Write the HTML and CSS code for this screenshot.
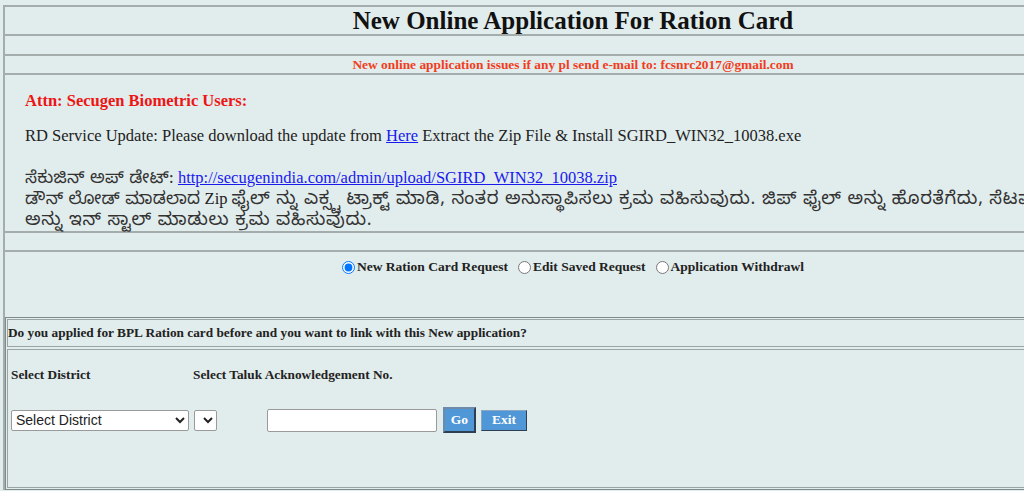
FILE: index.html
```html
<!DOCTYPE html>
<html lang="en">
  <head>
    <meta charset="UTF-8" />
    <meta name="viewport" content="width=device-width, initial-scale=1.0" />
    <title>New Online Application For Ration Card</title>
    <link rel="stylesheet" href="styles.css">
  </head>
  <body>
    <div class="page">
      <div class="row title-row">New Online Application For Ration Card</div>
      <div class="row blank-row"></div>
      <div class="row notice-row">New online application issues if any pl send e-mail to: fcsnrc2017@gmail.com</div>

      <div class="row info-row">
        <p class="attn">Attn: Secugen Biometric Users:</p>
        <p class="rd">RD Service Update: Please download the update from <a href="#">Here</a> Extract the Zip File &amp; Install SGIRD_WIN32_10038.exe</p>
        <div class="kn">
          <div class="kn-line"><span class="kan small">ಸೆಕುಜಿನ್ ಅಪ್ ಡೇಟ್:</span> <a href="#">http://secugenindia.com/admin/upload/SGIRD_WIN32_10038.zip</a></div>
          <div class="kn-line"><span class="kan small">ಡೌನ್ ಲೋಡ್ ಮಾಡಲಾದ</span> Zip <span class="kan">ಫೈಲ್ ನ್ನು ಎಕ್ಸ್ಟ ಟ್ರಾಕ್ಟ್ ಮಾಡಿ, ನಂತರ ಅನುಸ್ಥಾಪಿಸಲು ಕ್ರಮ ವಹಿಸುವುದು. ಜಿಪ್ ಫೈಲ್ ಅನ್ನು ಹೊರತೆಗೆದು, ಸೆಟಪ್ ಫೈಲ್</span></div>
          <div class="kn-line"><span class="kan">ಅನ್ನು ಇನ್ ಸ್ಟಾಲ್ ಮಾಡುಲು ಕ್ರಮ ವಹಿಸುವುದು.</span></div>
        </div>
      </div>

      <div class="row blank-row short"></div>

      <div class="radio-row">
        <div class="radios">
          <label><input type="radio" name="req" checked>New Ration Card Request</label>
          <label><input type="radio" name="req">Edit Saved Request</label>
          <label><input type="radio" name="req">Application Withdrawl</label>
        </div>

        <div class="link-box">
          <div class="link-head">Do you applied for BPL Ration card before and you want to link with this New application?</div>
          <div class="link-body">
            <div class="labels">
              <span class="lbl-district">Select District</span>
              <span>Select Taluk Acknowledgement No.</span>
            </div>
            <div class="controls">
              <select class="district">
                <option>Select District</option>
              </select>
              <select class="taluk">
                <option></option>
              </select>
              <input type="text" class="ack">
              <button class="btn go">Go</button>
              <button class="btn exit">Exit</button>
            </div>
          </div>
        </div>
      </div>
    </div>
  </body>
</html>
```

FILE: styles.css
```css
html, body {
  overflow: hidden;
}
body {
  margin: 0;
  background-color: #e1ecec;
  font-family: "Liberation Serif", "Times New Roman", serif;
  color: #222;
}
.page {
  width: 1136px;
  margin: 5px 0 0 3px;
  border-top: 2px solid #a4acac;
  border-left: 2px solid #a4acac;
}
.row {
  border-bottom: 2px solid #a4acac;
}
.title-row {
  height: 27px;
  line-height: 27px;
  text-align: center;
  font-size: 25px;
  font-weight: bold;
  color: #111;
}
.blank-row {
  height: 18px;
}
.blank-row.short {
  height: 17px;
}
.notice-row {
  height: 17px;
  line-height: 17px;
  text-align: center;
  font-size: 13.4px;
  font-weight: bold;
  color: #f23c1c;
}
.info-row {
  height: 158px;
  padding: 0 20px;
  box-sizing: border-box;
  font-size: 16.5px;
}
.info-row p {
  margin: 0;
}
.info-row a {
  color: #1a1aee;
}
.attn {
  padding-top: 17px;
  line-height: 18px;
  font-weight: bold;
  color: #ee1515;
}
.rd {
  margin-top: 17px !important;
  line-height: 18px;
}
.kn {
  margin-top: 22px;
  white-space: nowrap;
}
.kn-line {
  height: 21px;
  line-height: 21px;
  overflow: visible;
}
.kan {
  font-family: "Noto Sans Kannada", "Noto Sans", sans-serif;
  font-size: 18px;
  letter-spacing: 0.7px;
  line-height: 0;
  color: #333;
}
.kan.small {
  font-size: 17px;
  letter-spacing: 0.3px;
}
.radios {
  display: flex;
  justify-content: center;
  align-items: flex-start;
  gap: 10px;
  padding: 7px 0 0 0;
  height: 65px;
  box-sizing: border-box;
  font-size: 13.5px;
  font-weight: bold;
}
.radios label {
  display: flex;
  align-items: center;
}
.radios input {
  margin: 0 2px 0 0;
  width: 13px;
  height: 13px;
}
.link-box {
  border: 1px solid #7f8a8a;
  padding: 1px;
  height: 173px;
  box-sizing: border-box;
  display: flex;
  flex-direction: column;
  gap: 2px;
}
.link-head {
  height: 26px;
  line-height: 26px;
  border: 1px solid #9aa4a4;
  padding-left: 0;
  font-size: 13.3px;
  font-weight: bold;
}
.link-body {
  flex: 1;
  border: 1px solid #9aa4a4;
  padding: 16px 0 0 3px;
}
.labels {
  display: flex;
  font-size: 13.3px;
  font-weight: bold;
  height: 18px;
  line-height: 18px;
}
.lbl-district {
  width: 182px;
}
.controls {
  display: flex;
  align-items: center;
  margin-top: 23px;
}
.controls select {
  height: 21px;
  font-family: "Liberation Sans", Arial, sans-serif;
  font-size: 14px;
  background-color: #fff;
  border: 1px solid #9a9a9a;
  border-radius: 2px;
  color: #222;
}
.district {
  width: 178px;
}
.taluk {
  width: 23px;
  margin-left: 5px;
}
.ack {
  width: 170px;
  height: 23px;
  box-sizing: border-box;
  margin: 0 0 0 50px;
  border: 1px solid #9a9a9a;
  border-radius: 2px;
  background-color: #fff;
}
.btn {
  background-color: #4f97d7;
  color: #fff;
  font-family: "Liberation Serif", serif;
  font-size: 13.5px;
  font-weight: bold;
  padding: 0;
  cursor: pointer;
}
.go {
  width: 33px;
  height: 26px;
  margin-left: 6px;
  border: 2px solid #2d3f52;
  border-top-color: #6e8aa6;
  border-left-color: #6e8aa6;
}
.exit {
  width: 46px;
  height: 21px;
  margin-left: 5px;
  border: 1px solid #2d3f52;
  border-top-color: #8aa6c2;
  border-left-color: #8aa6c2;
}
```
